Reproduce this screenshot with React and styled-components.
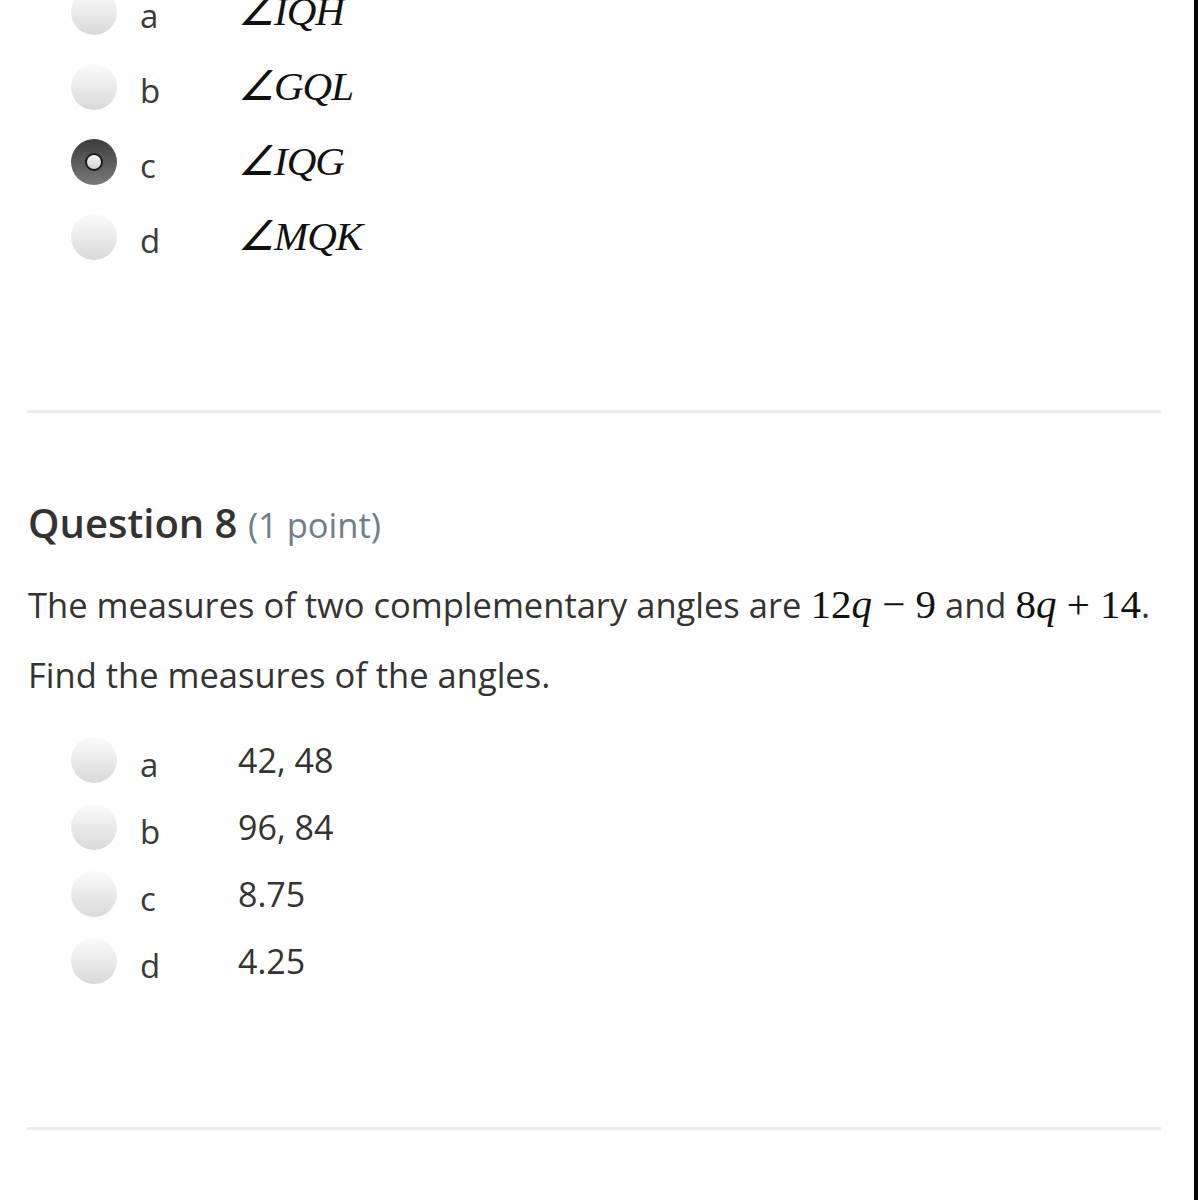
import React from "react";
import styled, { createGlobalStyle } from "styled-components";

const Global = createGlobalStyle`
  html, body { margin: 0; padding: 0; background: #fff; }
  body { font-family: "Open Sans", "Noto Sans", sans-serif; color: #333; overflow: hidden; }
`;

const Frame = styled.div`
  display: flex;
  width: 1198px;
  height: 1200px;
  overflow: hidden;
`;

const Content = styled.div`
  flex: 1;
  padding: 0 27px 0 27px;
  display: flex;
  flex-direction: column;
`;

const EdgeBar = styled.div`
  width: 4px;
  background: #050505;
`;

const OptionList = styled.div`
  display: flex;
  flex-direction: column;
  margin-top: ${(p) => p.$top || 0}px;
`;

const Option = styled.div`
  display: flex;
  align-items: center;
  height: ${(p) => p.$h}px;
`;

const Radio = styled.span`
  box-sizing: border-box;
  width: 46px;
  height: 46px;
  border-radius: 50%;
  margin-left: 44px;
  flex: none;
  display: flex;
  align-items: center;
  justify-content: center;
  background: ${(p) =>
    p.$checked
      ? "linear-gradient(#3c3c3c, #7a7a7a)"
      : "linear-gradient(#fbfbfb, #d9d9d9)"};
  &::after {
    content: "";
    display: ${(p) => (p.$checked ? "block" : "none")};
    width: 18px;
    height: 18px;
    border-radius: 50%;
    box-sizing: border-box;
    border: 2px solid #1a1a1a;
    background: linear-gradient(#f8f8f8, #d0d0d0);
  }
`;

const Letter = styled.span`
  width: 98px;
  margin-left: 23px;
  font-size: 33px;
  color: #3a3a3a;
  line-height: 1;
  padding-top: 8px;
`;

const Answer = styled.span`
  font-size: 34px;
  color: #333;
  line-height: 1;
`;

const MathAnswer = styled.span`
  font-family: "Liberation Serif", "Times New Roman", serif;
  font-style: italic;
  font-size: 41px;
  color: #111;
  line-height: 1;
  letter-spacing: -1px;
`;

const Divider = styled.hr`
  border: none;
  height: 3px;
  background: #ececec;
  margin: ${(p) => p.$mt}px 6px 0 0;
`;

const QuestionTitle = styled.h2`
  margin: 86px 0 0 1px;
  font-size: 40px;
  font-weight: 600;
  color: #333;
  line-height: 1.2;
`;

const Points = styled.span`
  font-weight: 400;
  font-size: 34.5px;
  color: #6f7d8c;
`;

const Para = styled.p`
  margin: ${(p) => p.$mt}px 0 0 1px;
  font-size: 34.5px;
  line-height: 1.2;
  color: #333;
  white-space: nowrap;
`;

const Expr = styled.span`
  font-family: "Liberation Serif", "Times New Roman", serif;
  font-size: 41px;
  line-height: 1;
  color: #111;
`;

const Var = styled.i`
  font-family: "Liberation Serif", "Times New Roman", serif;
`;

const group1 = [
  { l: "a", t: "∠IQH" },
  { l: "b", t: "∠GQL" },
  { l: "c", t: "∠IQG", checked: true },
  { l: "d", t: "∠MQK" },
];

const group2 = [
  { l: "a", t: "42, 48" },
  { l: "b", t: "96, 84" },
  { l: "c", t: "8.75" },
  { l: "d", t: "4.25" },
];

export default function App() {
  return (
    <>
      <Global />
      <Frame>
        <Content>
          <OptionList $top={-26}>
            {group1.map((o) => (
              <Option key={o.l} $h={75}>
                <Radio $checked={o.checked} />
                <Letter>{o.l}</Letter>
                <MathAnswer>{o.t}</MathAnswer>
              </Option>
            ))}
          </OptionList>
          <Divider $mt={136} />
          <QuestionTitle>
            Question 8 <Points>(1 point)</Points>
          </QuestionTitle>
          <Para $mt={37}>
            The measures of two complementary angles are{" "}
            <Expr>
              12<Var>q</Var> − 9
            </Expr>{" "}
            and{" "}
            <Expr>
              8<Var>q</Var> + 14
            </Expr>
            .
          </Para>
          <Para $mt={29}>Find the measures of the angles.</Para>
          <OptionList $top={31}>
            {group2.map((o) => (
              <Option key={o.l} $h={67}>
                <Radio />
                <Letter>{o.l}</Letter>
                <Answer>{o.t}</Answer>
              </Option>
            ))}
          </OptionList>
          <Divider $mt={132} />
        </Content>
        <EdgeBar />
      </Frame>
    </>
  );
}
